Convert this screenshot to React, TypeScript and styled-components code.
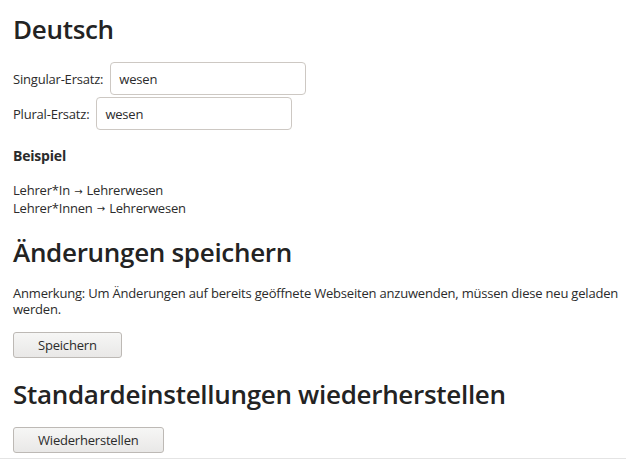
import React from "react";
import styled, { createGlobalStyle } from "styled-components";

const Global = createGlobalStyle`
  html, body { margin: 0; padding: 0; background: #ffffff; }
  body {
    font-family: "Open Sans", "Noto Sans", sans-serif;
    font-size: 13px;
    letter-spacing: -0.2px;
    color: #2b2b2b;
  }
`;

const Page = styled.div`
  padding: 0 3px 0 13px;
  min-height: 459px;
  border-bottom: 1px solid #e4e4e4;
  box-sizing: border-box;
  overflow: hidden;
`;

const Heading = styled.h1<{ $top: number }>`
  margin: ${(p) => p.$top}px 0 0 0;
  font-size: 26px;
  font-weight: 600;
  line-height: 34px;
  color: #232323;
  letter-spacing: -0.3px;
`;

const Form = styled.div`
  margin-top: 16px;
  display: flex;
  flex-direction: column;
  gap: 2px;
`;

const FieldRow = styled.label`
  display: flex;
  align-items: center;
  gap: 7px;
`;

const Input = styled.input`
  width: 196px;
  height: 33px;
  box-sizing: border-box;
  border: 1px solid #cdc8c3;
  border-radius: 4px;
  padding: 0 8px;
  font-family: inherit;
  font-size: 13px;
  letter-spacing: -0.2px;
  color: #2b2b2b;
  background: #fff;
`;

const SubHeading = styled.h2`
  margin: 17px 0 0 0;
  font-size: 14px;
  font-weight: 700;
  line-height: 18px;
`;

const Example = styled.div`
  margin-top: 17px;
  line-height: 17px;
`;

const Arrow = styled.span`
  font-family: "DejaVu Sans", sans-serif;
  font-size: 10px;
  margin: 0 1px;
  vertical-align: 0.5px;
`;

const Note = styled.p`
  margin: 16px 0 0 0;
  line-height: 16px;
`;

const Button = styled.button<{ $top: number }>`
  display: block;
  margin-top: ${(p) => p.$top}px;
  height: 26px;
  padding: 0 24px;
  font-family: inherit;
  font-size: 13px;
  letter-spacing: -0.2px;
  color: #2b2b2b;
  border: 1px solid #bdb9b5;
  border-radius: 3px;
  background: linear-gradient(#f6f6f5, #e9e8e7);
`;

export default function App() {
  return (
    <>
      <Global />
      <Page>
        <Heading $top={12}>Deutsch</Heading>
        <Form>
          <FieldRow>
            Singular-Ersatz:<Input defaultValue="wesen" />
          </FieldRow>
          <FieldRow>
            Plural-Ersatz:<Input defaultValue="wesen" />
          </FieldRow>
        </Form>
        <SubHeading>Beispiel</SubHeading>
        <Example>
          <div>Lehrer*In <Arrow>→</Arrow> Lehrerwesen</div>
          <div>Lehrer*Innen <Arrow>→</Arrow> Lehrerwesen</div>
        </Example>
        <Heading $top={18}>Änderungen speichern</Heading>
        <Note>
          Anmerkung: Um Änderungen auf bereits geöffnete Webseiten anzuwenden, müssen diese neu geladen
          werden.
        </Note>
        <Button $top={15}>Speichern</Button>
        <Heading $top={19}>Standardeinstellungen wiederherstellen</Heading>
        <Button $top={16}>Wiederherstellen</Button>
      </Page>
    </>
  );
}
